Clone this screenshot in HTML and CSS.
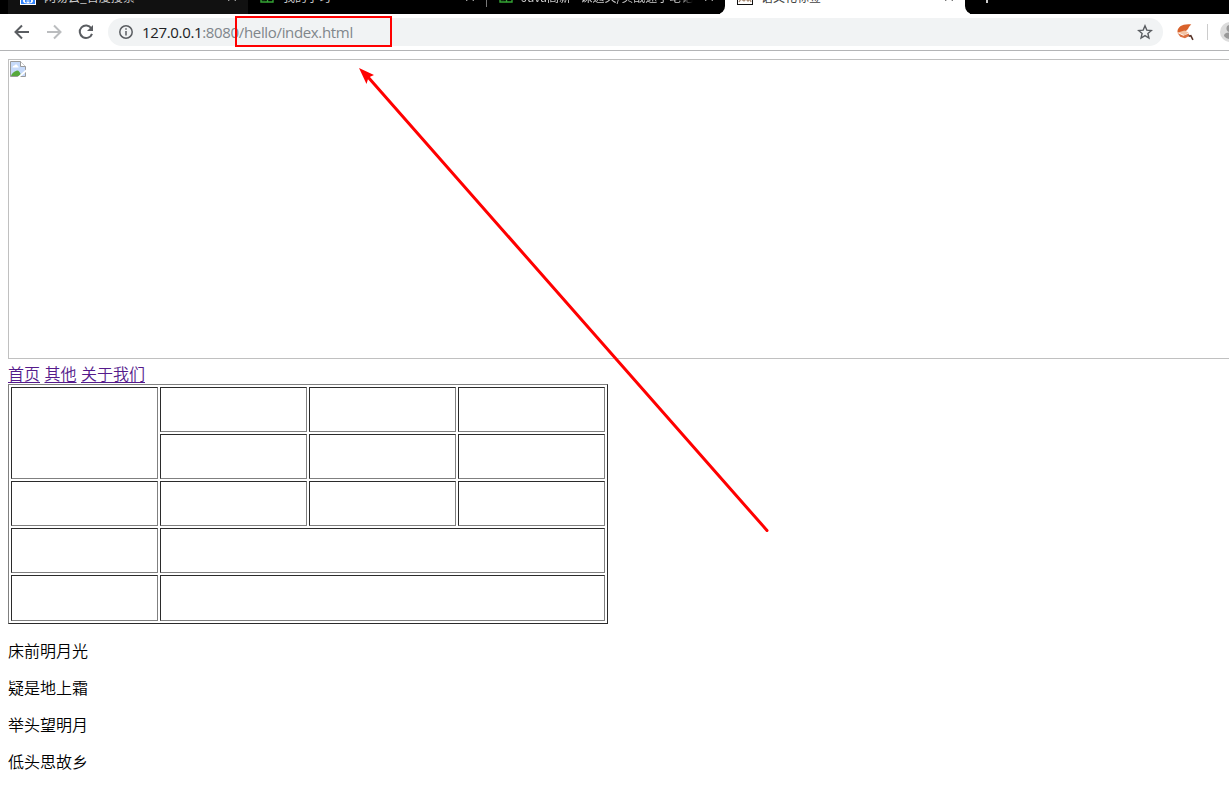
FILE: index.html
```html
<!DOCTYPE html>
<html lang="zh-CN">
<head>
<meta charset="utf-8">
<title>语文化标签</title>
<link rel="stylesheet" href="styles.css">
</head>
<body>
<div class="tabs">
  <div class="tab tab-dim">
    <svg class="fav" viewBox="0 0 16 16"><rect width="16" height="16" fill="#fff"/><rect x="1" y="1" width="14" height="14" fill="#3385ff"/><path d="M3 12q0-3 5-3t5 3q0 2.500-5 2.500t-5-2.500z" fill="#fff"/><path d="M5.500 11v2H7v-2zM9 11v2h1.500v-2z" fill="none" stroke="#3385ff"/></svg>
    <span class="tab-title">网易云_百度搜索</span><svg class="close" viewBox="0 0 8 8"><path d="M0 0l8 8M8 0L0 8" stroke="#999" stroke-width="1.200"/></svg>
  </div>
  <div class="tab tab-next">
    <svg class="fav" viewBox="0 0 16 16"><path d="M2 2v11h12V2M2 10.500h4l8-2M8.500 7v6" fill="none" stroke="#35a535" stroke-width="1.400"/></svg>
    <span class="tab-title">我的学习</span><svg class="close" viewBox="0 0 8 8"><path d="M0 0l8 8M8 0L0 8" stroke="#999" stroke-width="1.200"/></svg>
  </div>
  <div class="tab tab-third">
    <svg class="fav" viewBox="0 0 16 16"><path d="M2 2v11h12V2M2 10.500h4l8-2M8.500 7v6" fill="none" stroke="#35a535" stroke-width="1.400"/></svg>
    <span class="tab-title tab-fade">Java高薪 - 课通关/实战速学笔记</span><svg class="close" viewBox="0 0 8 8"><path d="M0 0l8 8M8 0L0 8" stroke="#999" stroke-width="1.200"/></svg>
  </div>
  <div class="tab tab-active">
    <svg class="fav" viewBox="0 0 16 16"><rect x=".5" y=".5" width="15" height="15" fill="#fff" stroke="#111"/><path d="M2 13l2-3 3 2 2-2 2 2 2-2 1 3" fill="none" stroke="#a98c75" stroke-width="1.300"/></svg>
    <span class="tab-title">语文化标签</span><svg class="close" viewBox="0 0 8 8"><path d="M0 0l8 8M8 0L0 8" stroke="#777" stroke-width="1.200"/></svg>
  </div>
  <div class="tab-rest"><span class="plus"></span></div>
</div>
<div class="toolbar">
  <svg class="nav" viewBox="0 0 16 16"><path d="M15 8H2M8 1.500L1.500 8L8 14.500" fill="none" stroke="#5a5d61" stroke-width="2"/></svg>
  <svg class="nav" viewBox="0 0 16 16"><path d="M1 8h13M8 1.500L14.500 8L8 14.500" fill="none" stroke="#bbbdbf" stroke-width="2"/></svg>
  <svg class="nav" viewBox="0 0 16 16"><path d="M13.300 4.200A6.300 6.300 0 1 0 14 9.800" fill="none" stroke="#5a5d61" stroke-width="2"/><path d="M15 1v6H9z" fill="#5a5d61"/></svg>
  <div class="address">
    <svg class="info" viewBox="0 0 14 14"><circle cx="7" cy="7" r="6.200" fill="none" stroke="#5a5d61" stroke-width="1.500"/><path d="M7 6v4.500M7 3.300v1.500" stroke="#5a5d61" stroke-width="1.500"/></svg>
    <span class="url"><span class="host">127.0.0.1</span>:8080<span class="path">/hello/index.html</span></span>
    <svg class="star" viewBox="0 0 16 16"><path d="M8 1.800l1.800 4.300 4.600.4-3.500 3 1.050 4.500L8 11.600 4.050 14l1.050-4.500-3.500-3 4.600-.4z" fill="none" stroke="#5a5d61" stroke-width="1.400"/></svg>
  </div>
  <svg class="ext" viewBox="0 0 16 16"><path d="M.5 8C0 3 5-.5 13.500.5 11 2 11 5 9 6L4 8z" fill="#d9622b"/><path d="M1 8l6-2 4 2-4 2.500z" fill="#f3c4a5"/><path d="M.5 8.500L6 11l5-2 1 2-4.500 2.500L3 12z" fill="#dd7140"/><path d="M11 11.500l2-.5 2 4" fill="none" stroke="#59352a" stroke-width="1.500"/></svg>
  <span class="sep"></span>
  <div class="profile"><svg class="avatar" viewBox="0 0 20 20"><circle cx="10" cy="10" r="10" fill="#dcdcdc"/><circle cx="10" cy="6.500" r="3.500" fill="#999"/><path d="M4 14q0-3.500 6-3.500t6 3.500q-2 3-6 3t-6-3z" fill="#999"/></svg></div>
</div>
<main class="page">
  <div class="banner">
    <svg class="broken" viewBox="0 0 16 16"><path d="M.5.5h10l5 5v10H.5z" fill="#c6dafa" stroke="#9a9a9a"/><path d="M10.500.5v5h5" fill="#fff" stroke="#9a9a9a"/><path d="M2.500 6.500q0-2 2-2 .5-1.500 2-1 1 .3 1 1.500 1.200.2 1.200 1.500z" fill="#fff"/><path d="M1 15q1-4 6-5.500 3 0 4 5.500z" fill="#56a83c"/><path d="M16 8.500L7.500 16H10l6-5z" fill="#fff"/></svg>
  </div>
  <nav class="links"><a href="#">首页</a> <a href="#">其他</a> <a href="#">关于我们</a></nav>
  <table class="grid">
    <tr><td rowspan="2"></td><td></td><td></td><td></td></tr>
    <tr><td></td><td></td><td></td></tr>
    <tr><td></td><td></td><td></td><td></td></tr>
    <tr><td></td><td colspan="3"></td></tr>
    <tr class="last"><td></td><td colspan="3"></td></tr>
  </table>
  <p>床前明月光</p>
  <p>疑是地上霜</p>
  <p>举头望明月</p>
  <p>低头思故乡</p>
</main>
<svg class="marks" viewBox="0 0 1229 792"><rect x="236" y="17" width="155" height="29" fill="none" stroke="#f00" stroke-width="2"/><path d="M767 530.500L368 77" stroke="#f00" stroke-width="3" stroke-linecap="round"/><path d="M359 68l15 7-5.500 2.500-2 6.500z" fill="#f00"/></svg>
</body>
</html>
```
FILE: styles.css
```css
* { box-sizing: border-box; }
html, body { height: 100%; }
body {
  margin: 0;
  overflow: hidden;
  position: relative;
  background: #fff;
  color: #000;
  font-family: "Noto Sans CJK SC", sans-serif;
}
svg { display: block; flex: none; }
.tabs {
  display: flex;
  align-items: flex-end;
  height: 14px;
  overflow: hidden;
  background: linear-gradient(90deg, #000 0 720px, #fff 720px 970px, #000 970px);
}
.tab {
  display: flex;
  align-items: flex-end;
  flex: none;
  height: 34px;
  padding: 0 10px 9px 12px;
  color: #ccc;
  font-size: 12px;
}
.tab-dim { width: 240px; margin-left: 8px; background: #111; }
.tab-next { width: 239px; padding-left: 11px; background: #000; border-right: 1px solid #000; border-image: linear-gradient(#777 26px, #000 26px) 1; border-width: 0 1px 0 0; }
.tab-third { width: 238px; padding-left: 11px; background: #000; border-radius: 0 0 8px 0; }
.tab-active { width: 240px; background: #fff; color: #444; }
.tab-rest { flex: 1; height: 14px; background: #000; border-radius: 0 0 0 8px; }
.plus { display: block; width: 2px; height: 3px; margin-left: 21px; background: #ccc; }
.fav { width: 16px; height: 16px; }
.tab-title { flex: 1; margin: 0 12px -1px 8px; line-height: 18px; white-space: nowrap; overflow: hidden; }
.tab-third .tab-title { margin-left: 7px; }
.tab-fade { mask-image: linear-gradient(90deg, #000 92%, transparent); }
.close { width: 8px; height: 8px; margin: 0 2px 4px 0; }
.toolbar {
  display: flex;
  align-items: center;
  height: 37px;
  padding-left: 14px;
  border-bottom: 1px solid #b3b4b6;
}
.nav { width: 16px; height: 16px; margin-right: 16px; }
.address {
  display: flex;
  align-items: center;
  flex: none;
  width: 1055px;
  height: 28px;
  margin-left: -2px;
  padding: 0 10px 0 11px;
  border-radius: 14px;
  background: #f1f3f4;
}
.info { width: 14px; height: 14px; }
.url {
  flex: 1;
  margin-left: 9px;
  color: #80868b;
  font: 15px/20px "Open Sans", "Noto Sans", sans-serif;
  letter-spacing: -0.34px;
  white-space: nowrap;
}
.host { color: #202124; }
.path { letter-spacing: -0.34px; }
.star { width: 16px; height: 16px; }
.ext { width: 17px; height: 17px; margin-left: 14px; }
.sep { width: 1px; height: 16px; margin-left: 13px; background: #ccc; }
.profile { flex: 1; min-width: 0; margin-left: 12px; overflow: hidden; }
.avatar { width: 20px; height: 20px; }
.page { padding: 8px 0 0 8px; }
.banner { height: 300px; border: 1px solid #c0c0c0; border-right: 0; padding: 1px; }
.broken { width: 16px; height: 16px; }
.links { height: 25px; padding-top: 4px; font-size: 16px; line-height: 21px; word-spacing: 0.9px; }
.links a { color: #551a8b; text-decoration-thickness: 1px; text-underline-offset: 2px; }
.links, .page p { font-weight: 350; }
.grid {
  width: 600px;
  height: 240px;
  table-layout: fixed;
  border: 1px solid;
  border-color: #808080 #2b2b2b #2b2b2b #808080;
  border-spacing: 2px;
}
.grid td {
  height: 45px;
  padding: 0;
  border: 1px solid;
  border-color: #2b2b2b #808080 #808080 #2b2b2b;
}
.grid tr { height: 45px; }
.grid .last, .grid .last td { height: 46px; }
.page p { margin: 16px 0; font-size: 16px; line-height: 21px; }
.marks { position: absolute; left: 0; top: 0; width: 1229px; height: 792px; pointer-events: none; }
```
